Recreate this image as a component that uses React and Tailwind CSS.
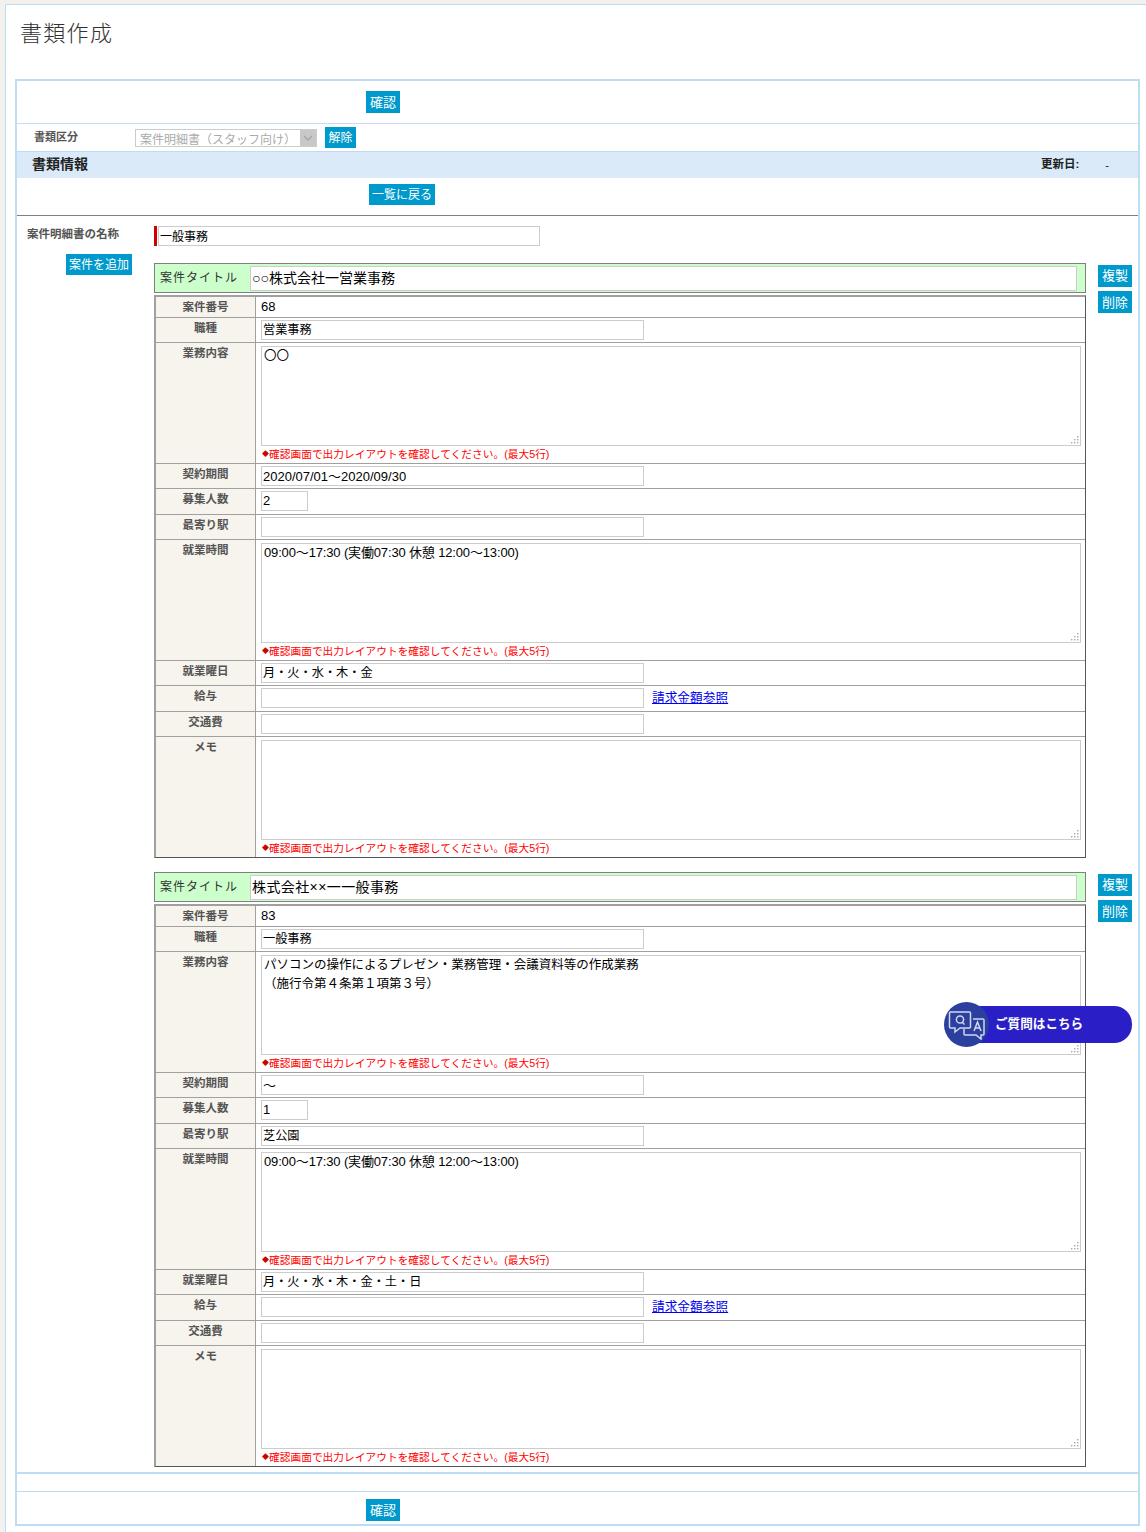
const FONT = "font-['Liberation_Sans','Noto_Sans_CJK_JP',sans-serif]";

const JOBS = [
  {
    title: '○○株式会社一営業事務',
    titleClass: '',
    no: '68',
    type: '営業事務',
    content: '〇〇',
    period: '2020/07/01～2020/09/30',
    count: '2',
    station: '',
    hours: '09:00～17:30 (実働07:30 休憩 12:00～13:00)',
    days: '月・火・水・木・金',
  },
  {
    title: '株式会社××一一般事務',
    titleClass: 'tracking-[0.4px]',
    no: '83',
    type: '一般事務',
    content: 'パソコンの操作によるプレゼン・業務管理・会議資料等の作成業務\n（施行令第４条第１項第３号）',
    period: '～',
    count: '1',
    station: '芝公園',
    hours: '09:00～17:30 (実働07:30 休憩 12:00～13:00)',
    days: '月・火・水・木・金・土・日',
  },
];

function Btn({ children, className = '' }) {
  return (
    <button type="button" className={`flex items-center justify-center bg-[#0099cc] text-white shrink-0 ${className}`}>
      {children}
    </button>
  );
}

function TextInput({ value, className = 'w-[383px]', textClass = 'text-[12.2px]' }) {
  return (
    <input
      readOnly
      defaultValue={value}
      className={`h-[20px] border border-[#cccccc] bg-white px-[1px] pb-[2px] text-black outline-none ${textClass} ${className}`}
    />
  );
}

function Row({ label, height, last, children }) {
  return (
    <div className={`flex ${height} ${last ? '' : 'border-b border-[#a0a0a0]'}`}>
      <div className="w-[100px] shrink-0 border-r border-[#a0a0a0] bg-[#f7f4ee] pt-[2px] text-center text-[11.5px] leading-[16px] font-bold text-[#555555]">
        {label}
      </div>
      <div className="flex-1 min-w-0">{children}</div>
    </div>
  );
}

function InputCell({ value, className, textClass, children }) {
  return (
    <div className="flex items-center gap-[8px] pl-[5px] pt-[2px]">
      <TextInput value={value} className={className} textClass={textClass} />
      {children}
    </div>
  );
}

function AreaCell({ value, textClass = 'text-[12.5px] leading-[19px]' }) {
  return (
    <div className="pl-[5px] pt-[3px]">
      <div className="relative h-[100px] w-[820px]">
        <textarea
          readOnly
          defaultValue={value}
          className={`block h-full w-full resize-none border border-[#cccccc] bg-white px-[2px] py-0 text-black outline-none ${textClass}`}
        />
        {/* resize grip */}
        <svg className="absolute right-[2px] bottom-[2px]" width="8" height="8" viewBox="0 0 8 8" fill="#a8a8a8">
          <rect x="6" y="0" width="1.4" height="1.4" />
          <rect x="3" y="3" width="1.4" height="1.4" />
          <rect x="6" y="3" width="1.4" height="1.4" />
          <rect x="0" y="6" width="1.4" height="1.4" />
          <rect x="3" y="6" width="1.4" height="1.4" />
          <rect x="6" y="6" width="1.4" height="1.4" />
        </svg>
      </div>
      <p className="flex items-center pl-[1px] pt-[1px] text-[10.72px] leading-[14px] whitespace-nowrap text-[#ff0000]">
        <span className="w-[7px] text-[7px] text-[#cc0000]">◆</span>
        確認画面で出力レイアウトを確認してください。(最大5行)
      </p>
    </div>
  );
}

function JobBlock({ job, className = '' }) {
  return (
    <div className={`flex ${className}`}>
      <div className="w-[932px] shrink-0">
        <div className="flex h-[30px] items-center border border-[#808080] bg-[#ccffcc]">
          <span className="w-[95px] shrink-0 pl-[5px] text-[12px] tracking-[1px] whitespace-nowrap text-[#333333]">案件タイトル</span>
          <input
            readOnly
            defaultValue={job.title}
            className={`h-[25px] w-[827px] border border-[#cccccc] bg-white px-[1px] pb-[2px] text-[14px] text-black outline-none ${job.titleClass}`}
          />
        </div>
        <div className="mt-[2px] border-t-2 border-l-2 border-r border-b border-t-[#a0a0a0] border-l-[#a0a0a0] border-r-[#555555] border-b-[#555555]">
          <Row label="案件番号" height="h-[21px]">
            <div className="pl-[5px] text-[13px] leading-[19px] text-black">{job.no}</div>
          </Row>
          <Row label="職種" height="h-[25px]"><InputCell value={job.type} /></Row>
          <Row label="業務内容" height="h-[121px]"><AreaCell value={job.content} /></Row>
          <Row label="契約期間" height="h-[25px]"><InputCell value={job.period} textClass="text-[13px]" /></Row>
          <Row label="募集人数" height="h-[26px]"><InputCell value={job.count} className="w-[47px]" textClass="text-[13px]" /></Row>
          <Row label="最寄り駅" height="h-[25px]"><InputCell value={job.station} /></Row>
          <Row label="就業時間" height="h-[121px]"><AreaCell value={job.hours} textClass="text-[13px] leading-[17px] tracking-[-0.15px]" /></Row>
          <Row label="就業曜日" height="h-[25px]"><InputCell value={job.days} /></Row>
          <Row label="給与" height="h-[26px]">
            <InputCell value="">
              <a href="#" className="pt-[1px] text-[12.7px] text-[#0000ee] underline">請求金額参照</a>
            </InputCell>
          </Row>
          <Row label="交通費" height="h-[25px]"><InputCell value="" /></Row>
          <Row label="メモ" height="h-[120px]" last><AreaCell value="" /></Row>
        </div>
      </div>
      <div className="ml-[12px] flex flex-col gap-[4px] pt-[2px]">
        <Btn className="h-[22px] w-[34px] text-[13px]">複製</Btn>
        <Btn className="h-[22px] w-[34px] pt-[1px] text-[13px]">削除</Btn>
      </div>
    </div>
  );
}

export default function App() {
  return (
    <div className={`relative h-[1532px] w-[1146px] overflow-hidden bg-[#f3f1ee] pt-[4px] pl-[5px] ${FONT}`}>
      <div className="h-full border-t border-l border-[#bfdcf5] bg-white">
        <h1 className="h-[74px] pt-[15px] pl-[14px] text-[22px] leading-[28px] font-light tracking-[1.3px] text-[#333333]">書類作成</h1>

        <div className="ml-[9px] h-[1447px] w-[1125px] border-x-2 border-t-2 border-b-2 border-[#bfdcf5]">
          <div className="flex h-[43px] items-start border-b border-[#c8dcef] pt-[10px] pl-[349px]">
            <Btn className="h-[22px] w-[34px] pt-[1px] text-[13px]">確認</Btn>
          </div>

          <div className="flex h-[27px] items-center text-[11px] font-bold text-[#555555]">
            <span className="w-[118px] pl-[17px]">書類区分</span>
            <div className="flex h-[18px] w-[182px] border border-[#cccccc] bg-white">
              <select disabled className="w-[164px] appearance-none bg-white pt-[1px] pl-[4px] text-[12px] font-normal text-[#aaaaaa] outline-none">
                <option>案件明細書（スタッフ向け）</option>
              </select>
              <span className="flex flex-1 items-center justify-center bg-[#c8c8c8]">
                <svg width="10" height="6" viewBox="0 0 10 6" fill="none" stroke="#a8a8a8" strokeWidth="1.5"><path d="M1 1l4 4 4-4" /></svg>
              </span>
            </div>
            <Btn className="ml-[8px] h-[21px] w-[31px] text-[12px] font-normal">解除</Btn>
          </div>

          <div className="flex h-[27px] items-center border-t border-[#bfdcf5] bg-[#daeaf9] text-[#222222]">
            <span className="pb-[2px] pl-[15px] text-[14px] font-bold">書類情報</span>
            <span className="ml-auto text-[11.5px] font-bold">更新日:</span>
            <span className="mr-[29px] ml-[26px] text-[11px]">-</span>
          </div>

          <div className="flex h-[38px] items-start border-b border-[#808080] pt-[6px] pl-[352px]">
            <Btn className="h-[21px] w-[66px] text-[12px]">一覧に戻る</Btn>
          </div>

          <div className="flex">
            <div className="flex w-[137px] shrink-0 flex-col pt-[11px]">
              <span className="pl-[10px] text-[11.5px] leading-[15px] font-bold text-[#555555]">案件明細書の名称</span>
              <Btn className="mt-[12px] mr-[22px] h-[21px] w-[66px] self-end text-[12px]">案件を追加</Btn>
            </div>
            <div className="pt-[10px]">
              <div className="flex h-[20px]">
                <span className="w-[3px] bg-[#cc0000]" />
                <TextInput value="一般事務" className="ml-[1px] w-[382px]" textClass="text-[12px]" />
              </div>
              <JobBlock job={JOBS[0]} className="mt-[17px]" />
              <JobBlock job={JOBS[1]} className="mt-[14px]" />
            </div>
          </div>

          <div className="mt-[5px] h-[20px] border-t-2 border-b border-[#bfdcf5]" />
          <div className="flex pt-[7px] pl-[349px]">
            <Btn className="h-[22px] w-[34px] pt-[1px] text-[13px]">確認</Btn>
          </div>
        </div>
      </div>

      {/* 質問ボタン */}
      <div className="absolute top-[1006px] left-[966px] flex h-[37px] w-[166px] items-center rounded-r-[18px] bg-[#2a1fc6] pl-[29px] text-[12.6px] font-bold text-white">
        ご質問はこちら
      </div>
      <div className="absolute top-[1002px] left-[944px] flex h-[45px] w-[45px] items-center justify-center rounded-full bg-[#2b3f9e]">
        <svg width="38" height="30" viewBox="0 0 38 30" fill="none" stroke="#d3d8ee" strokeWidth="1.5">
          <path d="M2.5 2h19a1 1 0 0 1 1 1v14a1 1 0 0 1-1 1H12l-5 4v-4H2.500a1 1 0 0 1-1-1V3a1 1 0 0 1 1-1z" />
          <circle cx="12" cy="9.500" r="3.600" />
          <path d="M14 12l2.500 2.500" />
          <path d="M25 9h10a1 1 0 0 1 1 1v14a1 1 0 0 1-1 1h-2v4l-5-4H17a1 1 0 0 1-1-1v-5" />
          <path d="M26 21l3.500-9 3.500 9M27.200 18h4.600" />
        </svg>
      </div>
    </div>
  );
}
